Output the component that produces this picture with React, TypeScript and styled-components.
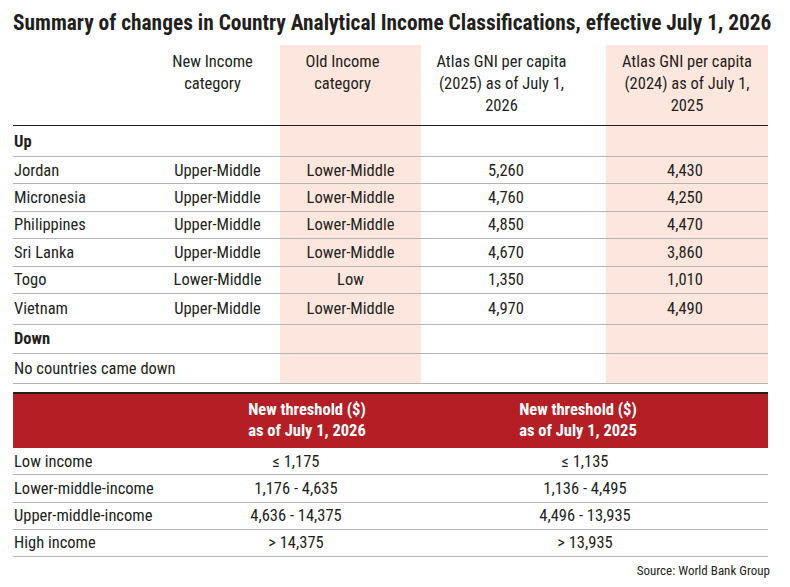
import React from 'react';
import styled, { createGlobalStyle } from 'styled-components';

const GlobalStyle = createGlobalStyle`
  html, body {
    margin: 0;
    padding: 0;
    background: #ffffff;
  }
  body {
    font-family: 'Roboto Condensed', Roboto, 'Liberation Sans', sans-serif;
    font-stretch: condensed;
    color: #231f20;
  }
`;

const PINK = '#fde6dd';
const LINE = '#b5b5b5';

const Page = styled.div`
  width: 790px;
  height: 587px;
  padding: 10px 22px 0 13px;
  box-sizing: border-box;
  display: flex;
  flex-direction: column;
`;

const Title = styled.h1`
  margin: 0;
  font-size: 21.4px;
  font-weight: 700;
  line-height: 26px;
  white-space: nowrap;
  color: #231f20;
`;

const Table = styled.div`
  margin-top: 9px;
  display: flex;
  flex-direction: column;
`;

const cols = '142px 125px 141px 185px 162px';

const HeadRow = styled.div`
  display: grid;
  grid-template-columns: ${cols};
  height: 81px;
  border-bottom: 1px solid #231f20;
  box-sizing: border-box;
`;

const Row = styled.div<{ $h?: number }>`
  display: grid;
  grid-template-columns: ${cols};
  height: ${(p) => p.$h ?? 27.5}px;
  border-bottom: 1px solid ${LINE};
  box-sizing: border-box;
`;

const HeadCell = styled.div<{ $shade?: boolean; $pr?: number }>`
  background: ${(p) => (p.$shade ? PINK : 'transparent')};
  font-size: 16.5px;
  line-height: 22px;
  text-align: center;
  padding: 6px ${(p) => p.$pr ?? 0}px 0 0;
`;

const Cell = styled.div<{ $shade?: boolean; $align?: string; $bold?: boolean; $pr?: number }>`
  background: ${(p) => (p.$shade ? PINK : 'transparent')};
  font-size: 16.5px;
  font-weight: ${(p) => (p.$bold ? 700 : 400)};
  display: flex;
  align-items: center;
  justify-content: ${(p) => p.$align ?? 'center'};
  padding-right: ${(p) => p.$pr ?? 0}px;
  padding-left: ${(p) => (p.$align === 'flex-start' ? 1 : 0)}px;
  white-space: nowrap;
`;

const Threshold = styled.div`
  margin-top: 8px;
  display: flex;
  flex-direction: column;
`;

const tcols = '177px 212px 366px';

const RedHead = styled.div`
  display: grid;
  grid-template-columns: ${tcols};
  height: 56px;
  background: #b51e24;
  border-top: 2px solid #231f20;
  box-sizing: border-box;
`;

const RedCell = styled.div<{ $shift?: number }>`
  color: #ffffff;
  font-size: 16.5px;
  font-weight: 700;
  line-height: 21px;
  text-align: center;
  padding-top: 5px;
  transform: translateX(${(p) => p.$shift ?? 0}px);
`;

const TRow = styled.div`
  display: grid;
  grid-template-columns: ${tcols};
  height: 27.3px;
  border-bottom: 1px solid ${LINE};
  box-sizing: border-box;
`;

const TCell = styled.div<{ $left?: boolean }>`
  font-size: 16.5px;
  display: flex;
  align-items: center;
  justify-content: ${(p) => (p.$left ? 'flex-start' : 'center')};
  padding-left: ${(p) => (p.$left ? 1 : 0)}px;
  white-space: nowrap;
`;

const Source = styled.div`
  margin-top: 6px;
  font-size: 13px;
  text-align: right;
  margin-right: -2px;
`;

const up = [
  ['Jordan', 'Upper-Middle', 'Lower-Middle', '5,260', '4,430'],
  ['Micronesia', 'Upper-Middle', 'Lower-Middle', '4,760', '4,250'],
  ['Philippines', 'Upper-Middle', 'Lower-Middle', '4,850', '4,470'],
  ['Sri Lanka', 'Upper-Middle', 'Lower-Middle', '4,670', '3,860'],
  ['Togo', 'Lower-Middle', 'Low', '1,350', '1,010'],
  ['Vietnam', 'Upper-Middle', 'Lower-Middle', '4,970', '4,490'],
];

const thresholds = [
  ['Low income', '≤ 1,175', '≤ 1,135'],
  ['Lower-middle-income', '1,176 - 4,635', '1,136 - 4,495'],
  ['Upper-middle-income', '4,636 - 14,375', '4,496 - 13,935'],
  ['High income', '> 14,375', '> 13,935'],
];

function GroupRow({ label, h }: { label: string; h: number }) {
  return (
    <Row $h={h}>
      <Cell $align="flex-start" $bold>{label}</Cell>
      <Cell />
      <Cell $shade />
      <Cell />
      <Cell $shade />
    </Row>
  );
}

export default function App() {
  return (
    <Page>
      <GlobalStyle />
      <Title>Summary of changes in Country Analytical Income Classifications, effective July 1, 2026</Title>
      <Table>
        <HeadRow>
          <HeadCell />
          <HeadCell $pr={10}>New Income<br />category</HeadCell>
          <HeadCell $shade $pr={16}>Old Income<br />category</HeadCell>
          <HeadCell $pr={24}>Atlas GNI per capita<br />(2025) as of July 1,<br />2026</HeadCell>
          <HeadCell $shade>Atlas GNI per capita<br />(2024) as of July 1,<br />2025</HeadCell>
        </HeadRow>
        <GroupRow label="Up" h={31} />
        {up.map((r, i) => (
          <Row key={r[0]} $h={i === up.length - 1 ? 31 : 27.4}>
            <Cell $align="flex-start">{r[0]}</Cell>
            <Cell>{r[1]}</Cell>
            <Cell $shade>{r[2]}</Cell>
            <Cell $pr={15}>{r[3]}</Cell>
            <Cell $shade $pr={4}>{r[4]}</Cell>
          </Row>
        ))}
        <GroupRow label="Down" h={29} />
        <Row $h={30}>
          <Cell $align="flex-start">No countries came down</Cell>
          <Cell />
          <Cell $shade />
          <Cell />
          <Cell $shade />
        </Row>
      </Table>
      <Threshold>
        <RedHead>
          <RedCell />
          <RedCell $shift={11}>New threshold ($)<br />as of July 1, 2026</RedCell>
          <RedCell $shift={-7}>New threshold ($)<br />as of July 1, 2025</RedCell>
        </RedHead>
        {thresholds.map((t) => (
          <TRow key={t[0]}>
            <TCell $left>{t[0]}</TCell>
            <TCell>{t[1]}</TCell>
            <TCell>{t[2]}</TCell>
          </TRow>
        ))}
      </Threshold>
      <Source>Source: World Bank Group</Source>
    </Page>
  );
}
